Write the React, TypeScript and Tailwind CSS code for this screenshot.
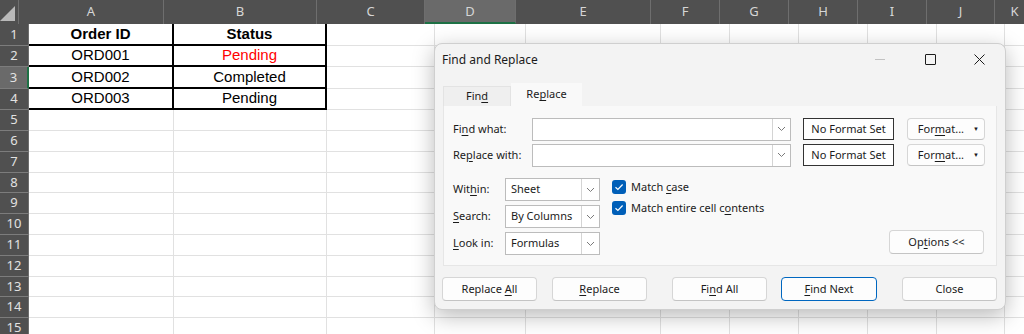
import React from "react"

const COLS = [
  { l: "A", w: "w-[145px]" },
  { l: "B", w: "w-[153px]" },
  { l: "C", w: "w-[108px]" },
  { l: "D", w: "w-[91px]", active: true },
  { l: "E", w: "w-[135px]" },
  { l: "F", w: "w-[69px]" },
  { l: "G", w: "w-[69px]" },
  { l: "H", w: "w-[69px]" },
  { l: "I", w: "w-[69px]" },
  { l: "J", w: "w-[68px]" },
  { l: "K", w: "w-[40px]" },
]

const DATA: Record<number, [string, string, boolean?]> = {
  1: ["Order ID", "Status"],
  2: ["ORD001", "Pending", true],
  3: ["ORD002", "Completed"],
  4: ["ORD003", "Pending"],
}

// row heights in the sheet (px), table rows a bit taller
const ROW_H: Record<number, string> = {
  1: "h-[22px]",
  2: "h-[21px]",
  3: "h-[22px]",
  4: "h-[21px]",
  8: "h-[20px]",
  13: "h-[20px]",
}

const ROWS = Array.from({ length: 15 }, (_, i) => i + 1)

const U = ({ children }: { children: React.ReactNode }) => <span className="underline underline-offset-2">{children}</span>

function Chevron() {
  return (
    <svg width="9" height="6" viewBox="0 0 9 6" fill="none">
      <path d="M1 1l3.5 3.5L8 1" stroke="#7a7a7a" strokeWidth="1" />
    </svg>
  )
}

function Check() {
  return (
    <span className="flex h-[14px] w-[14px] items-center justify-center rounded-[3px] bg-[#005fb8]">
      <svg width="10" height="8" viewBox="0 0 10 8" fill="none">
        <path d="M1.5 4.2l2.4 2.3L8.6 1.5" stroke="white" strokeWidth="1.2" />
      </svg>
    </span>
  )
}

function Btn({ children, className = "", primary = false }: { children: React.ReactNode; className?: string; primary?: boolean }) {
  return (
    <div
      className={`flex h-[24px] items-center justify-center rounded-[4px] border bg-[#fdfdfd] ${
        primary ? "border-[#0067c0]" : "border-[#d6d6d6] border-b-[#c4c4c4]"
      } ${className}`}
    >
      <span>{children}</span>
    </div>
  )
}

function Combo({ value, className = "" }: { value: string; className?: string }) {
  return (
    <div className={`flex h-[23px] items-stretch border border-[#bcbcbc] bg-white ${className}`}>
      <div className="flex flex-1 items-center pl-[5px]">{value}</div>
      <div className="flex w-[18px] items-center justify-center border-l border-[#d4d4d4]">
        <Chevron />
      </div>
    </div>
  )
}

function FormatBtn() {
  return (
    <div className="ml-[13px] flex h-[22px] w-[78px] items-center justify-end rounded-[4px] border border-[#d6d6d6] border-b-[#c4c4c4] bg-[#fdfdfd] pr-[5px]">
      <span>
        For<U>m</U>at...
      </span>
      <span className="ml-[9px] text-[6px]">▼</span>
    </div>
  )
}

function Dialog() {
  return (
    <div className="absolute left-[434px] top-[43px] flex h-[267px] w-[572px] flex-col rounded-[8px] border border-[#cfcfcf] bg-[#f3f3f3] text-[11px] text-[#1b1b1b] shadow-[0_6px_22px_rgba(0,0,0,0.28)] [font-family:'Noto_Sans',sans-serif]">
      <div className="flex h-[31px] items-center">
        <div className="pl-[7px] text-[12px]">Find and Replace</div>
        <div className="ml-auto flex h-full">
          <div className="flex w-[50px] items-center justify-center">
            <div className="h-px w-[10px] bg-[#c2c2c2]" />
          </div>
          <div className="flex w-[50px] items-center justify-center">
            <div className="h-[11px] w-[11px] rounded-[1px] border border-[#1b1b1b]" />
          </div>
          <div className="flex w-[50px] items-center justify-center pr-[2px]">
            <svg width="11" height="11" viewBox="0 0 11 11" fill="none">
              <path d="M0.5 0.5l10 10M10.5 0.5l-10 10" stroke="#1b1b1b" strokeWidth="1" />
            </svg>
          </div>
        </div>
      </div>

      <div className="mt-[8px] flex h-[23px] items-end pl-[8px]">
        <div className="flex h-[20px] w-[68px] items-center justify-center border border-b-0 border-[#e3e3e3] bg-[#efefef]">
          <span>
            Fin<U>d</U>
          </span>
        </div>
        <div className="flex h-[23px] w-[71px] items-center justify-center bg-[#f9f9f9]">
          <span>
            Re<U>p</U>lace
          </span>
        </div>
      </div>

      <div className="mx-[8px] flex h-[160px] flex-col border border-t-0 border-[#e6e6e6] bg-[#f9f9f9] px-[9px] pt-[12px]">
        <div className="flex h-[22px] items-center">
          <div className="w-[79px]">
            Fi<U>n</U>d what:
          </div>
          <Combo value="" className="h-[22px] w-[259px]" />
          <div className="ml-[12px] flex h-[22px] w-[91px] items-center justify-center border border-[#333] bg-white">No Format Set</div>
          <FormatBtn />
        </div>
        <div className="mt-[4px] flex h-[22px] items-center">
          <div className="w-[79px]">
            Re<U>p</U>lace with:
          </div>
          <Combo value="" className="h-[22px] w-[259px]" />
          <div className="ml-[12px] flex h-[22px] w-[91px] items-center justify-center border border-[#333] bg-white">No Format Set</div>
          <FormatBtn />
        </div>

        <div className="mt-[12px] flex">
          <div className="flex flex-col gap-[4px]">
            <div className="flex items-center">
              <div className="w-[52px]">
                Wit<U>h</U>in:
              </div>
              <Combo value="Sheet" className="w-[95px]" />
            </div>
            <div className="flex items-center">
              <div className="w-[52px]">
                <U>S</U>earch:
              </div>
              <Combo value="By Columns" className="w-[95px]" />
            </div>
            <div className="flex items-center">
              <div className="w-[52px]">
                <U>L</U>ook in:
              </div>
              <Combo value="Formulas" className="w-[95px]" />
            </div>
          </div>
          <div className="ml-[12px] flex flex-col gap-[5px] pt-[1px]">
            <div className="flex h-[16px] items-center gap-[5px]">
              <Check />
              <span>
                Match <U>c</U>ase
              </span>
            </div>
            <div className="flex h-[16px] items-center gap-[5px]">
              <Check />
              <span>
                Match entire cell c<U>o</U>ntents
              </span>
            </div>
          </div>
          <div className="ml-auto flex flex-col justify-end pb-[1px] pr-[3px]">
            <Btn className="w-[95px]">
              Op<U>t</U>ions &lt;&lt;
            </Btn>
          </div>
        </div>
      </div>

      <div className="mt-[11px] flex pl-[7px]">
        <Btn className="w-[95px]">
          Replace <U>A</U>ll
        </Btn>
        <Btn className="ml-[15px] w-[95px]">
          <U>R</U>eplace
        </Btn>
        <Btn className="ml-[25px] w-[95px]">
          Fi<U>n</U>d All
        </Btn>
        <Btn primary className="ml-[14px] w-[96px]">
          <U>F</U>ind Next
        </Btn>
        <Btn className="ml-[25px] w-[95px]">Close</Btn>
      </div>
    </div>
  )
}

export default function App() {
  return (
    <div className="relative h-[334px] w-[1024px] overflow-hidden bg-white">
      <div className="flex h-[24px] bg-[#505050] text-[13px] text-[#d6d6d6] [font-family:'Noto_Sans',sans-serif]">
        <div className="flex w-[29px] items-end justify-end border-r border-[#6e6e6e] pb-[3px] pr-[3px]">
          <div className="h-0 w-0 border-b-[15px] border-l-[15px] border-b-[#b9b9b9] border-l-transparent" />
        </div>
        {COLS.map((c) => (
          <div
            key={c.l}
            className={`flex shrink-0 items-center justify-center border-r border-[#6e6e6e] ${c.w} ${
              c.active ? "border-b-2 border-b-[#1e7145] bg-[#6a6a6a] pt-[2px]" : ""
            }`}
          >
            {c.l}
          </div>
        ))}
      </div>

      {ROWS.map((r) => {
        const d = DATA[r]
        return (
          <div key={r} className={`flex ${ROW_H[r] || "h-[21px]"}`}>
            <div
              className={`flex w-[29px] shrink-0 items-center justify-center border-b border-[#7c7c7c] text-[13px] text-[#e2e2e2] [font-family:'Noto_Sans',sans-serif] ${
                r === 3 ? "border-r-2 border-r-[#1e7145] bg-[#6a6a6a]" : "border-r border-r-[#6e6e6e] bg-[#505050]"
              }`}
            >
              {r}
            </div>
            {COLS.map((c, i) => {
              const inTable = d && i < 2
              const red = inTable && i === 1 && d[2]
              return (
                <div
                  key={c.l}
                  className={`flex shrink-0 items-center justify-center text-[15px] [font-family:'Liberation_Sans',Arial,sans-serif] ${c.w} ${
                    inTable ? "border-b-2 border-r-2 border-black" : "border-b border-r border-[#e1e1e1]"
                  } ${r === 1 ? "font-bold" : ""} ${red ? "text-[#ff0000]" : "text-black"}`}
                >
                  {inTable ? d[i as 0 | 1] : ""}
                </div>
              )
            })}
          </div>
        )
      })}

      <Dialog />
    </div>
  )
}
